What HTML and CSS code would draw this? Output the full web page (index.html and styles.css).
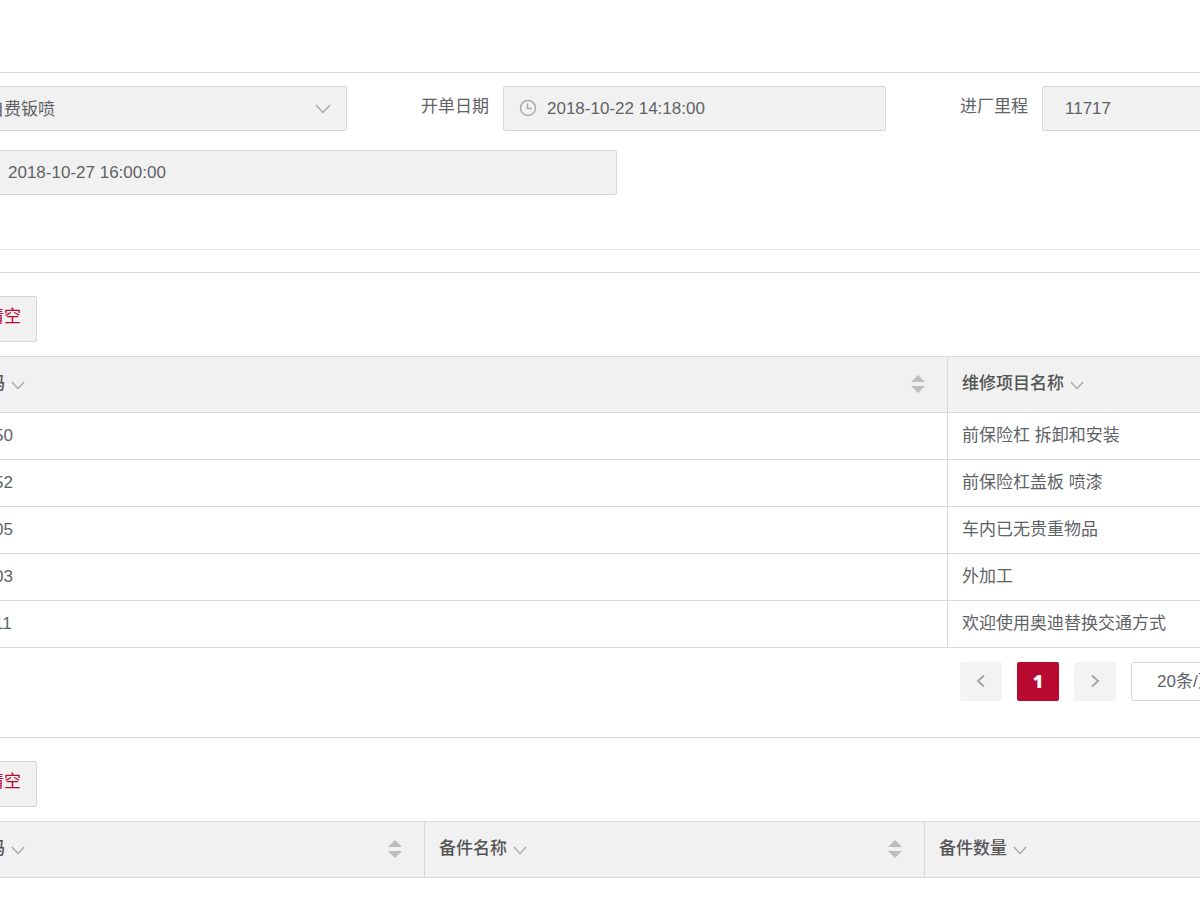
FILE: index.html
```html
<!DOCTYPE html>
<html lang="zh-CN">
<head>
<meta charset="utf-8">
<title>维修项目</title>
<link rel="stylesheet" href="styles.css">
</head>
<body>
<svg class="defs" width="0" height="0" aria-hidden="true">
  <symbol id="down" viewBox="0 0 16 10"><path d="M1 1l7 7.5L15 1"/></symbol>
  <symbol id="clock" viewBox="0 0 18 18"><circle cx="9" cy="9" r="7.5"/><path d="M8.5 4.5v5h4.5"/></symbol>
  <symbol id="sort" viewBox="0 0 14 18"><path d="M7 0l7 7H0zM0 11h14l-7 7z"/></symbol>
</svg>
<main class="page">
  <header class="topbar"></header>

  <form class="order">
    <div class="row">
      <div class="field field-type">
        <div class="control">
          <select class="input type" aria-label="维修类型"><option>自费钣喷</option></select>
          <svg class="icon arrow"><use href="#down"/></svg>
        </div>
      </div>
      <div class="field field-date">
        <label for="open">开单日期</label>
        <div class="control">
          <svg class="icon clock"><use href="#clock"/></svg>
          <input class="input dated" id="open" type="text" value="2018-10-22 14:18:00">
        </div>
      </div>
      <div class="field field-mileage">
        <label for="mileage">进厂里程</label>
        <div class="control"><input class="input" id="mileage" type="text" value="11717"></div>
      </div>
    </div>
    <div class="row">
      <div class="control promised">
        <svg class="icon clock"><use href="#clock"/></svg>
        <input class="input dated" type="text" aria-label="交车时间" value="2018-10-27 16:00:00">
      </div>
    </div>
  </form>

  <section class="panel">
    <button class="clear" type="button">清空</button>
    <table class="grid">
      <colgroup><col class="item-code"><col></colgroup>
      <thead>
        <tr>
          <th><div class="head"><span>码</span><svg class="icon filter"><use href="#down"/></svg><button class="sort" type="button" aria-label="排序"><svg><use href="#sort"/></svg></button></div></th>
          <th><div class="head"><span>维修项目名称</span><svg class="icon filter"><use href="#down"/></svg></div></th>
        </tr>
      </thead>
      <tbody>
        <tr><td>50</td><td>前保险杠 拆卸和安装</td></tr>
        <tr><td>52</td><td>前保险杠盖板 喷漆</td></tr>
        <tr><td>05</td><td>车内已无贵重物品</td></tr>
        <tr><td>03</td><td>外加工</td></tr>
        <tr><td>11</td><td>欢迎使用奥迪替换交通方式</td></tr>
      </tbody>
    </table>
    <nav class="pager">
      <button class="page-btn" type="button" aria-label="上一页"><svg viewBox="0 0 10 14"><path d="M8 1.500L2 7l6 5.500"/></svg></button>
      <button class="page-btn current" type="button">1</button>
      <button class="page-btn" type="button" aria-label="下一页"><svg viewBox="0 0 10 14"><path d="M2 1.500L8 7l-6 5.500"/></svg></button>
      <select class="size" aria-label="每页条数"><option>20条/页</option></select>
    </nav>
  </section>

  <section class="panel">
    <button class="clear" type="button">清空</button>
    <table class="grid">
      <colgroup><col class="part-code"><col class="part-name"><col></colgroup>
      <thead>
        <tr>
          <th><div class="head"><span>码</span><svg class="icon filter"><use href="#down"/></svg><button class="sort" type="button" aria-label="排序"><svg><use href="#sort"/></svg></button></div></th>
          <th><div class="head"><span>备件名称</span><svg class="icon filter"><use href="#down"/></svg><button class="sort" type="button" aria-label="排序"><svg><use href="#sort"/></svg></button></div></th>
          <th><div class="head"><span>备件数量</span><svg class="icon filter"><use href="#down"/></svg></div></th>
        </tr>
      </thead>
    </table>
  </section>
</main>
</body>
</html>
```
FILE: styles.css
```css
* { box-sizing: border-box; }
html { overflow: hidden; }
body {
  margin: 0;
  overflow: hidden;
  background: #fff;
  color: #606266;
  font: 17px/24px "Liberation Sans", "Noto Sans CJK SC", sans-serif;
}
button, input, select { font: inherit; color: inherit; margin: 0; }
.defs { position: absolute; }

/* The sheet is wider than the window on both sides */
.page { margin: 0 -40px 0 -36px; }
.topbar { height: 73px; border-bottom: 1px solid #dadada; }

.order {
  display: flex;
  flex-direction: column;
  gap: 19px;
  padding: 13px 0 54px;
  border-bottom: 1px solid #e4e4e4;
}
.row { display: flex; gap: 74px; }
.field { display: flex; align-items: center; gap: 14px; }
.field label { flex: none; padding-bottom: 3px; }
.field-type { flex: 383 1 0; }
.field-date { flex: 465 1 0; }
.field-mileage { flex: 280 1 0; }
.control { position: relative; flex: 1; min-width: 0; }
.promised { flex: none; width: 653px; }
.input {
  display: block;
  width: 100%;
  height: 45px;
  padding: 0 22px;
  border: 1px solid #d6d6d6;
  border-radius: 2px;
  background: #f1f1f1;
  appearance: none;
}
.type { padding-top: 2px; }
.dated { padding-left: 43px; }
.icon { fill: none; stroke: #a9a9a9; stroke-width: 1.5; }
.arrow { position: absolute; right: 16px; top: 18px; width: 16px; height: 10px; }
.clock { position: absolute; left: 16px; top: 13px; width: 18px; height: 18px; }

.panel { border-top: 1px solid #dadada; padding-top: 23px; }
.order + .panel { margin-top: 22px; }
.clear {
  display: block;
  height: 46px;
  margin: 0 0 14px 7px;
  padding: 0 15px 4px;
  border: 1px solid #d6d6d6;
  border-radius: 2px;
  background: #f1f1f1;
  color: #b80a30;
}

.grid {
  width: 100%;
  table-layout: fixed;
  border-collapse: separate;
  border-spacing: 0;
  border-top: 1px solid #dadada;
}
.item-code { width: 984px; }
.part-code { width: 461px; }
.part-name { width: 500px; }
th, td {
  padding: 0 14px;
  border-right: 1px solid #dadada;
  border-bottom: 1px solid #dadada;
  text-align: left;
}
th { height: 56px; background: #f1f1f1; color: #555; font-weight: 500; }
td { height: 47px; }
th:first-child { padding-left: 24px; }
td:first-child { padding-left: 30px; }
.head { display: flex; align-items: center; padding-bottom: 2px; }
.filter { width: 14px; height: 9px; margin: 3px 0 0 6px; }
.sort {
  display: flex;
  margin-left: auto;
  margin-right: 8px;
  padding: 0;
  border: 0;
  background: none;
}
.sort svg { width: 14px; height: 18px; fill: #bdbdbd; }

.pager {
  display: flex;
  justify-content: flex-end;
  gap: 15px;
  padding: 14px 0 36px;
}
.page-btn {
  display: flex;
  align-items: center;
  justify-content: center;
  width: 42px;
  height: 39px;
  padding: 0 0 2px;
  border: 0;
  border-radius: 2px;
  background: #f3f3f3;
}
.page-btn svg { width: 10px; height: 14px; fill: none; stroke: #a6a6a6; stroke-width: 2; }
.current { background: #b80a30; color: #fff; font-family: "Open Sans", sans-serif; font-size: 18px; font-weight: 800; }
.size {
  width: 109px;
  height: 39px;
  padding: 0 0 0 25px;
  border: 1px solid #d6d6d6;
  border-radius: 3px;
  background: #fff;
  appearance: none;
}
```
